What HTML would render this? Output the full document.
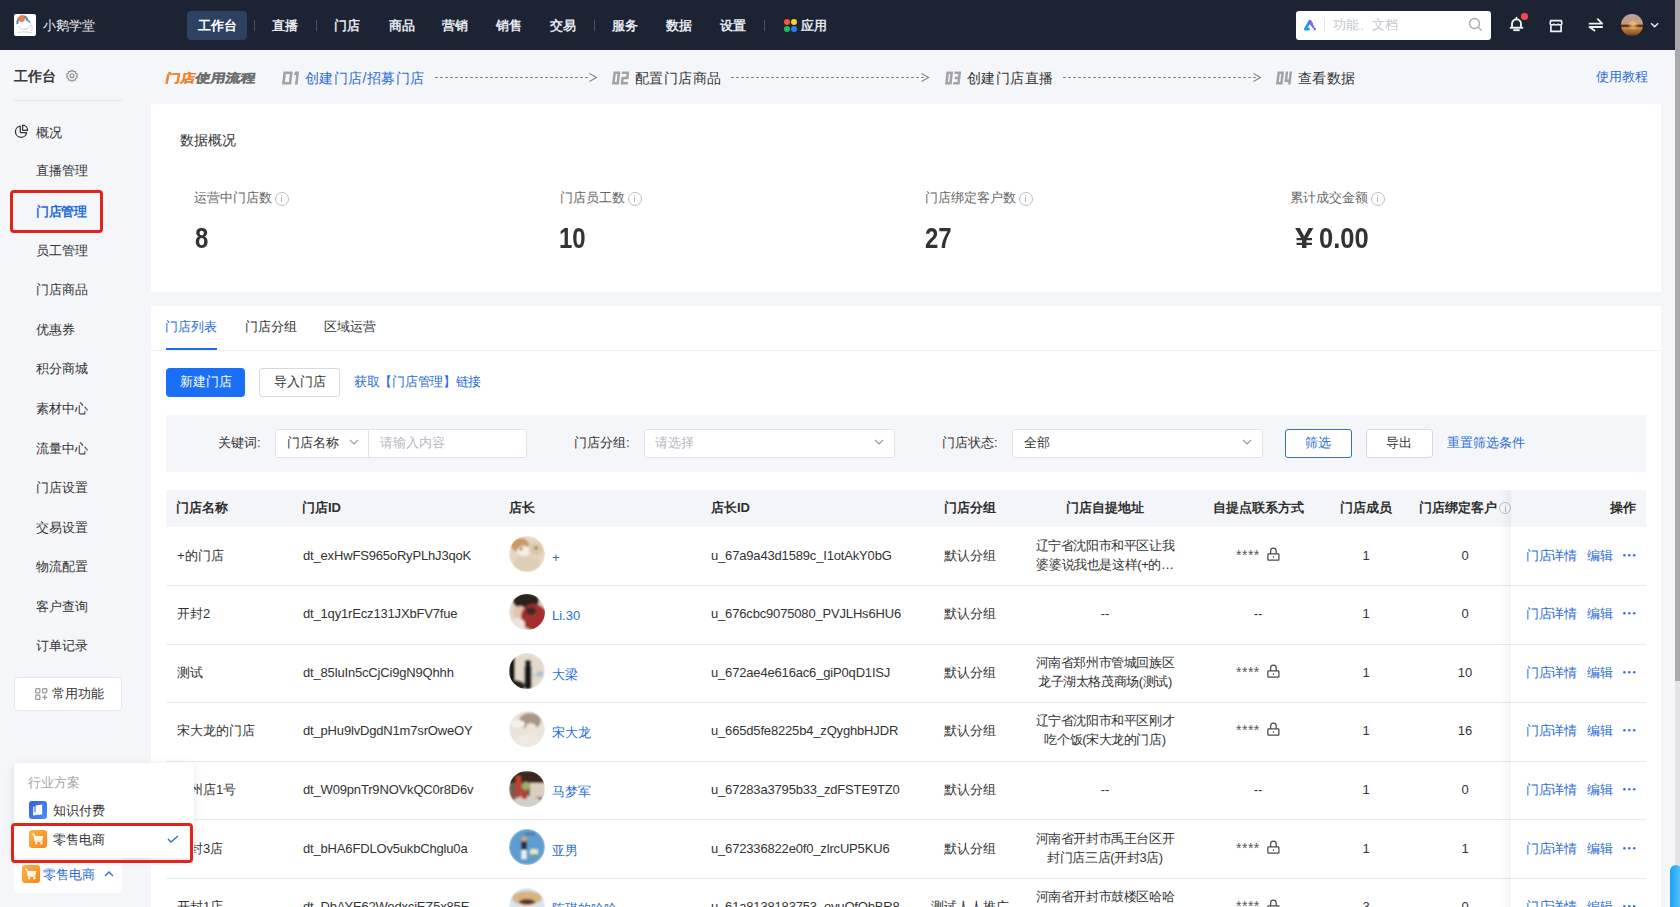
<!DOCTYPE html>
<html><head><meta charset="utf-8">
<style>
*{box-sizing:border-box;margin:0;padding:0}
html,body{width:1680px;height:907px;overflow:hidden}
body{font-family:"Liberation Sans",sans-serif;background:#f5f6fa;color:#333;position:relative;font-size:13px}
.a{position:absolute;white-space:nowrap}
#hdr{position:absolute;left:0;top:0;width:1680px;height:50px;background:#1c2332}
.nav{position:absolute;top:15.5px;font-size:13px;line-height:20px;color:#e4e7ee;font-weight:bold}
.sep{position:absolute;top:20px;width:1px;height:11px;background:#4a5162}
.side{position:absolute;white-space:nowrap;left:36px;font-size:13px;line-height:16px;color:#333}
.panel{position:absolute;background:#fff}
.blue{color:#2a6bd9}
.stat-l{position:absolute;top:190px;font-size:13px;color:#666;line-height:16px}
.stat-v{position:absolute;top:223px;font-size:30px;font-weight:bold;color:#333;line-height:30px;transform:scaleX(0.8);transform-origin:0 0}
.stepn{top:69px;font-size:16px;line-height:20px;font-weight:bold;font-style:italic;color:#a0a0a0;-webkit-text-stroke:0.6px #a0a0a0}
.stept{top:68px;font-size:14px;line-height:20px;color:#333;letter-spacing:0.4px}
.dash{top:77px;height:1px;background:repeating-linear-gradient(90deg,#8a8a8a 0 3px,transparent 3px 5px)}
.flab{top:433px;font-size:13px;line-height:20px;color:#333}
.ftx{top:433px;font-size:13px;line-height:20px}
.inp{top:429px;height:29px;background:#fff;border:1px solid #e1e3e8;border-radius:3px}
.th{font-size:13px;line-height:20px;font-weight:bold;color:#2e2e2e}
.td{font-size:13px;line-height:20px;color:#333}
.id{letter-spacing:-0.17px}
#sidebar{position:absolute;left:0;top:0;width:200px;height:907px;z-index:5}
.info{display:inline-block;width:14px;height:14px;border:1px solid #c0c0c0;border-radius:50%;vertical-align:-4px;margin-left:3px;position:relative}
.info:after{content:"";position:absolute;left:5px;top:4px;width:1px;height:5px;background:#b8b8b8}
.info:before{content:"";position:absolute;left:5px;top:2px;width:1px;height:1px;background:#b8b8b8}
</style></head><body>
<div id="hdr">
  <div class="a" style="left:14px;top:14px;width:22px;height:22px;background:#fff;border-radius:2px;overflow:hidden">
    <svg class="a" style="left:0;top:0" width="22" height="22" viewBox="0 0 22 22"><path d="M3.5 10 C3 6 5 3 8 2.5 C11 2 13.5 4 13 7" fill="none" stroke="#5f86ad" stroke-width="2.2"/><circle cx="7.6" cy="4.6" r="3.4" fill="#e8824f"/><path d="M12.5 6.5 C14.5 6 16 7 15.5 9" fill="none" stroke="#7a9cc0" stroke-width="1.6"/><path d="M5 12 C6 15 9 16 12 15 C14 14.5 16 12.5 17 11 C18.5 12 18.5 15 17 17" fill="none" stroke="#c8d2dc" stroke-width="1"/><path d="M3.5 19 C6 17.5 13 17.5 18 19" fill="none" stroke="#d0d6dc" stroke-width="1"/></svg>
  </div>
  <div class="a" style="left:43px;top:15.5px;font-size:13px;line-height:20px;color:#eceef2">小鹅学堂</div>
  <div class="a" style="left:187px;top:11px;width:60px;height:29px;background:#2d4163;border-radius:4px"></div>
  <div class="nav" style="left:198px;color:#fff">工作台</div>
  <div class="sep" style="left:254px"></div>
  <div class="nav" style="left:272px">直播</div>
  <div class="sep" style="left:316px"></div>
  <div class="nav" style="left:334px">门店</div>
  <div class="nav" style="left:389px">商品</div>
  <div class="nav" style="left:442px">营销</div>
  <div class="nav" style="left:496px">销售</div>
  <div class="nav" style="left:550px">交易</div>
  <div class="sep" style="left:594px"></div>
  <div class="nav" style="left:612px">服务</div>
  <div class="nav" style="left:666px">数据</div>
  <div class="nav" style="left:720px">设置</div>
  <div class="sep" style="left:764px"></div>
  <div class="a" style="left:784px;top:19px;width:12px;height:12px">
    <div class="a" style="left:0;top:0;width:6px;height:6px;border-radius:50%;background:#f25a32"></div>
    <div class="a" style="left:6.5px;top:0;width:6px;height:6px;border-radius:50%;background:#ffcf2e"></div>
    <div class="a" style="left:0;top:6.5px;width:6px;height:6px;border-radius:50%;background:#1fbf62"></div>
    <div class="a" style="left:6.5px;top:6.5px;width:6px;height:6px;border-radius:50%;background:#2a7ef8"></div>
  </div>
  <div class="nav" style="left:801px">应用</div>
  <!-- search -->
  <div class="a" style="left:1296px;top:11px;width:195px;height:29px;background:#fff;border-radius:3px"></div>
  <svg class="a" style="left:1303px;top:19px" width="15" height="12" viewBox="0 0 15 12"><defs><linearGradient id="lg1" x1="0" y1="1" x2="1" y2="0"><stop offset="0" stop-color="#12a8f0"/><stop offset="1" stop-color="#3a6ff0"/></linearGradient></defs><path d="M2.2 10.2 L6.9 2.2 L8.6 5 M2.2 10.2 L5.6 10.2" fill="none" stroke="url(#lg1)" stroke-width="2.7" stroke-linecap="round" stroke-linejoin="round"/><path d="M7.6 3.4 L10.2 8" fill="none" stroke="#8a63e8" stroke-width="2.5" stroke-linecap="round"/><circle cx="11.8" cy="10.1" r="1.3" fill="#8a63e8"/></svg>
  <div class="a" style="left:1324px;top:19px;width:1px;height:13px;background:#e2e4e8"></div>
  <div class="a" style="left:1333px;top:17px;font-size:13px;line-height:16px;color:#c4c7cd">功能、文档</div>
  <svg class="a" style="left:1468px;top:17px" width="15" height="15" viewBox="0 0 15 15"><circle cx="6.5" cy="6.5" r="5" fill="none" stroke="#a9abb0" stroke-width="1.4"/><path d="M10.2 10.2 L13.5 13.5" stroke="#a9abb0" stroke-width="1.4"/></svg>
  <!-- bell -->
  <svg class="a" style="left:1508px;top:16px" width="17" height="18" viewBox="0 0 17 18"><path d="M8.5 1.6 L8.5 3" stroke="#eef0f4" stroke-width="1.6" stroke-linecap="round"/><path d="M4 11.5 L4 8 C4 5.2 6 3.3 8.5 3.3 C11 3.3 13 5.2 13 8 L13 11.5" fill="none" stroke="#eef0f4" stroke-width="1.9"/><path d="M2.6 11.8 L14.4 11.8" stroke="#eef0f4" stroke-width="2" stroke-linecap="round"/><rect x="5.3" y="13.2" width="6.4" height="1.9" fill="#eef0f4"/></svg>
  <div class="a" style="left:1521px;top:13px;width:6.6px;height:6.6px;border-radius:50%;background:#f04a4a"></div>
  <svg class="a" style="left:1548px;top:17px" width="16" height="16" viewBox="0 0 16 16"><path d="M2.6 3.6 L13.4 3.6 L13.9 7 Q12.1 8.8 10.2 7.2 Q8 8.8 5.8 7.2 Q3.9 8.8 2.1 7 Z" fill="none" stroke="#eef0f4" stroke-width="1.6" stroke-linejoin="round"/><path d="M2.9 8.2 L2.9 14.4 L13.1 14.4 L13.1 8.2" fill="none" stroke="#eef0f4" stroke-width="1.7"/></svg>
  <svg class="a" style="left:1588px;top:18px" width="16" height="14" viewBox="0 0 16 14"><path d="M1.5 5.7 L14.2 5.7 L9.8 1.2" fill="none" stroke="#eef0f4" stroke-width="1.8" stroke-linejoin="round" stroke-linecap="round"/><path d="M14.2 9 L1.5 9 L6.4 12.6" fill="none" stroke="#eef0f4" stroke-width="1.8" stroke-linejoin="round" stroke-linecap="round"/></svg>
  <div class="a" style="left:1621px;top:14px;width:22px;height:22px;border-radius:50%;background:radial-gradient(circle at 55% 50%,rgba(255,205,120,.9) 0,rgba(255,190,100,0) 35%),linear-gradient(180deg,#b6a0a0 0%,#d09a78 45%,#5a3218 52%,#4a2a18 56%,#d08a48 62%,#9a6030 85%,#5a3a22 100%)"></div>
  <svg class="a" style="left:1650px;top:22px" width="10" height="6" viewBox="0 0 10 6"><path d="M1 1.2 L4.6 4.6 L8.2 1.2" fill="none" stroke="#e8eaee" stroke-width="1.5"/></svg>
</div>
<!-- scrollbar -->
<div class="a" style="left:1675px;top:0;width:5px;height:907px;background:#e4e4e6"></div>
<div class="a" style="left:1675px;top:0;width:5px;height:681px;background:#a9a9ab"></div>
<div class="a" style="left:1670px;top:865px;width:12px;height:50px;border-radius:6px 6px 0 0;background:linear-gradient(90deg,#1aa0ef,#5cc8ff)"></div>

<!-- SIDEBAR -->
<div id="sidebar">
  <div class="a" style="left:14px;top:66px;font-size:14px;line-height:20px;font-weight:bold;color:#383838">工作台</div>
  <svg class="a" style="left:65px;top:69px" width="14" height="14" viewBox="0 0 14 14"><path d="M7 1.2 L8.3 2.6 L10.2 2.3 L10.6 4.2 L12.4 5 L11.6 6.8 L12.4 8.6 L10.6 9.4 L10.2 11.3 L8.3 11 L7 12.4 L5.7 11 L3.8 11.3 L3.4 9.4 L1.6 8.6 L2.4 6.8 L1.6 5 L3.4 4.2 L3.8 2.3 L5.7 2.6 Z" fill="none" stroke="#8a8a8a" stroke-width="1.1" stroke-linejoin="round"/><circle cx="7" cy="6.8" r="2" fill="none" stroke="#8a8a8a" stroke-width="1.1"/></svg>
  <div class="a" style="left:14px;top:100px;width:108px;height:1px;background:#e3e5ea"></div>
  <svg class="a" style="left:14px;top:124px" width="15" height="15" viewBox="0 0 15 15"><path d="M6.3 2.2 A5.6 5.6 0 1 0 12.6 8.6 L6.3 8.6 Z" fill="none" stroke="#333" stroke-width="1.25" stroke-linejoin="round"/><path d="M8.6 1.2 L8.6 6.3 L13.6 6.3 A5.2 5.2 0 0 0 8.6 1.2 Z" fill="none" stroke="#333" stroke-width="1.25" stroke-linejoin="round"/></svg>
  <div class="side" style="top:123px;line-height:20px">概况</div>
  <div class="side" style="top:161px;line-height:20px">直播管理</div>
  <div class="a" style="left:9.5px;top:190px;width:93px;height:42.5px;border:3px solid #e2231a;border-radius:4px"></div>
  <div class="side" style="top:202px;line-height:20px;color:#1f6ae0;font-weight:bold;letter-spacing:-0.3px">门店管理</div>
  <div class="side" style="top:241px;line-height:20px">员工管理</div>
  <div class="side" style="top:280px;line-height:20px">门店商品</div>
  <div class="side" style="top:320px;line-height:20px">优惠券</div>
  <div class="side" style="top:359px;line-height:20px">积分商城</div>
  <div class="side" style="top:399px;line-height:20px">素材中心</div>
  <div class="side" style="top:439px;line-height:20px">流量中心</div>
  <div class="side" style="top:478px;line-height:20px">门店设置</div>
  <div class="side" style="top:518px;line-height:20px">交易设置</div>
  <div class="side" style="top:557px;line-height:20px">物流配置</div>
  <div class="side" style="top:597px;line-height:20px">客户查询</div>
  <div class="side" style="top:636px;line-height:20px">订单记录</div>
  <div class="a" style="left:14px;top:677px;width:108px;height:34px;background:#fff;border:1px solid #e4e6eb;border-radius:4px"></div>
  <svg class="a" style="left:35px;top:688px" width="13" height="12" viewBox="0 0 13 12"><rect x="0.7" y="0.7" width="4.2" height="4.2" rx="0.8" fill="none" stroke="#9a9a9a" stroke-width="1.3"/><rect x="7.6" y="0.7" width="4.2" height="4.2" rx="0.8" fill="none" stroke="#9a9a9a" stroke-width="1.3"/><rect x="0.7" y="7.2" width="4.2" height="4.2" rx="0.8" fill="none" stroke="#9a9a9a" stroke-width="1.3"/><path d="M9.7 6.8 L9.7 11.8 M7.2 9.3 L12.2 9.3" stroke="#9a9a9a" stroke-width="1.3"/></svg>
  <div class="a" style="left:52px;top:684px;font-size:13px;line-height:20px;color:#333">常用功能</div>
  <!-- bottom button -->
  <div class="a" style="left:14px;top:857px;width:108px;height:36px;background:#fff;border-radius:4px"></div>
  <div class="a" style="left:22px;top:865px;width:18px;height:18px;border-radius:3px;background:linear-gradient(135deg,#ffb444,#f6851f)"></div>
  <svg class="a" style="left:25px;top:868px" width="12" height="12" viewBox="0 0 12 12"><path d="M0.6 0.8 L2.2 2.2 L3.4 8 L10 8" fill="none" stroke="#fff" stroke-width="1.3" stroke-linejoin="round" stroke-linecap="round"/><path d="M2.6 3 L11.4 3 L10.4 7 L3.3 7 Z" fill="#fff" opacity="0.92"/><rect x="3.2" y="9.3" width="2" height="2" fill="#fff"/><rect x="8.4" y="9.3" width="2" height="2" fill="#fff"/></svg>
  <div class="a" style="left:43px;top:865px;font-size:13px;line-height:20px;color:#2a6bd9">零售电商</div>
  <svg class="a" style="left:104px;top:870px" width="10" height="7" viewBox="0 0 10 7"><path d="M1 6 L5 2 L9 6" fill="none" stroke="#2a6bd9" stroke-width="1.3"/></svg>
  <!-- popup -->
  <div class="a" style="left:14px;top:763px;width:180px;height:95px;background:#fff;border-radius:4px;box-shadow:0 2px 10px rgba(0,0,0,0.10)"></div>
  <div class="a" style="left:28px;top:773px;font-size:13px;line-height:20px;color:#a3a6ad">行业方案</div>
  <div class="a" style="left:29px;top:801px;width:18px;height:18px;border-radius:3px;background:linear-gradient(135deg,#3461e0,#4d8cf6)"></div>
  <svg class="a" style="left:29px;top:801px" width="18" height="18" viewBox="0 0 18 18"><path d="M6.6 4.6 L13.2 3.6 L13.2 13.6 Q9 13.6 4.2 14.4 L4.2 5.8 L5.4 5.6 L5.4 11.2 L6.6 11.2 Z" fill="#fff"/></svg>
  <div class="a" style="left:53px;top:801px;font-size:13px;line-height:20px;color:#333">知识付费</div>
  <div class="a" style="left:29px;top:830px;width:18px;height:18px;border-radius:3px;background:linear-gradient(135deg,#ffb444,#f6851f)"></div>
  <svg class="a" style="left:32px;top:833px" width="12" height="12" viewBox="0 0 12 12"><path d="M0.6 0.8 L2.2 2.2 L3.4 8 L10 8" fill="none" stroke="#fff" stroke-width="1.3" stroke-linejoin="round" stroke-linecap="round"/><path d="M2.6 3 L11.4 3 L10.4 7 L3.3 7 Z" fill="#fff" opacity="0.92"/><rect x="3.2" y="9.3" width="2" height="2" fill="#fff"/><rect x="8.4" y="9.3" width="2" height="2" fill="#fff"/></svg>
  <div class="a" style="left:53px;top:830px;font-size:13px;line-height:20px;color:#333">零售电商</div>
  <svg class="a" style="left:167px;top:835px" width="12" height="8" viewBox="0 0 12 8"><path d="M1 4 L4 7 L11 1" fill="none" stroke="#2a6bd9" stroke-width="1.3"/></svg>
  <div class="a" style="left:10.5px;top:822.5px;width:182px;height:40px;border:3px solid #e2231a;border-radius:4px"></div>
</div>
<!-- MAIN -->
<div id="main">
  <!-- step bar -->
  <!--digits--><svg class="a" style="left:281.8px;top:70.5px" width="22" height="14" viewBox="0 0 22 14"><g transform="translate(1.5,0.5) skewX(-6.6)"><path fill-rule="evenodd" fill="#a3a3a3" d="M0 0 H9.2 V13 H0 Z M2.6 2.6 V10.4 H6.6 V2.6 Z M11.8 0 H15.6 V13 H13.0 V3.4 H11 V1.6 Z"/></g></svg><svg class="a" style="left:612.4px;top:70.5px" width="22" height="14" viewBox="0 0 22 14"><g transform="translate(1.5,0.5) skewX(-6.6)"><path fill-rule="evenodd" fill="#a3a3a3" d="M0 0 H6.9 V13 H0 Z M2.6 2.6 V10.4 H4.300000000000001 V2.6 Z M8.6 0 H15.8 V7.7 H11.1 V10.5 H15.8 V13 H8.6 V5.3 H13.3 V2.5 H8.6 Z"/></g></svg><svg class="a" style="left:944.5px;top:70.5px" width="22" height="14" viewBox="0 0 22 14"><g transform="translate(1.5,0.5) skewX(-6.6)"><path fill-rule="evenodd" fill="#a3a3a3" d="M0 0 H6.6 V13 H0 Z M2.6 2.6 V10.4 H3.9999999999999996 V2.6 Z M8 0 H14.6 V13 H8 V10.5 H12.1 V7.7 H9 V5.3 H12.1 V2.5 H8 Z"/></g></svg><svg class="a" style="left:1275.5px;top:70.5px" width="22" height="14" viewBox="0 0 22 14"><g transform="translate(1.5,0.5) skewX(-6.6)"><path fill-rule="evenodd" fill="#a3a3a3" d="M0 0 H6.6 V13 H0 Z M2.6 2.6 V10.4 H3.9999999999999996 V2.6 Z M8.2 0 H10.7 V8 H12.1 V0 H14.6 V13 H12.1 V10.5 H8.2 Z"/></g></svg><!--/digits-->
  <div class="a" style="left:165px;top:67px;font-size:15px;line-height:20px;font-weight:900;color:#6e6e6e;transform:skewX(-10deg) scaleY(0.78);transform-origin:0 14px;-webkit-text-stroke:0.4px"><span style="color:#f0802f">门店</span>使用流程</div>
    <div class="a stept" style="left:305px;color:#2a6bd9">创建门店/招募门店</div>
  <div class="a dash" style="left:435px;width:153px"></div>
  <svg class="a" style="left:588px;top:72px" width="10" height="11" viewBox="0 0 10 11"><path d="M1.5 1.5 L8.5 5.5 L1.5 9.5" fill="none" stroke="#888" stroke-width="1.2"/></svg>
    <div class="a stept" style="left:635px">配置门店商品</div>
  <div class="a dash" style="left:731px;width:195px"></div>
  <svg class="a" style="left:920px;top:72px" width="10" height="11" viewBox="0 0 10 11"><path d="M1.5 1.5 L8.5 5.5 L1.5 9.5" fill="none" stroke="#888" stroke-width="1.2"/></svg>
    <div class="a stept" style="left:967px">创建门店直播</div>
  <div class="a dash" style="left:1063px;width:195px"></div>
  <svg class="a" style="left:1252px;top:72px" width="10" height="11" viewBox="0 0 10 11"><path d="M1.5 1.5 L8.5 5.5 L1.5 9.5" fill="none" stroke="#888" stroke-width="1.2"/></svg>
    <div class="a stept" style="left:1298px">查看数据</div>
  <div class="a" style="left:1596px;top:67px;font-size:13px;line-height:20px;color:#2a6bd9">使用教程</div>

  <!-- stats panel -->
  <div class="panel" style="left:151px;top:104px;width:1510px;height:188px"></div>
  <div class="a" style="left:180px;top:130px;font-size:14px;line-height:20px;color:#333">数据概况</div>
  <div class="a stat-l" style="left:194px">运营中门店数<i class="info"></i></div>
  <div class="a stat-v" style="left:195px">8</div>
  <div class="a stat-l" style="left:560px">门店员工数<i class="info"></i></div>
  <div class="a stat-v" style="left:559px">10</div>
  <div class="a stat-l" style="left:925px">门店绑定客户数<i class="info"></i></div>
  <div class="a stat-v" style="left:925px">27</div>
  <div class="a stat-l" style="left:1290px">累计成交金额<i class="info"></i></div>
  <div class="a stat-v" style="left:1295px;transform:scaleX(1.11)">¥</div><div class="a stat-v" style="left:1319px;transform:scaleX(0.85)">0.00</div>

  <!-- list panel -->
  <div class="panel" style="left:151px;top:306px;width:1510px;height:620px"></div>
  <div class="a" style="left:165px;top:317px;font-size:13px;line-height:20px;color:#2a6bd9">门店列表</div>
  <div class="a" style="left:165.5px;top:347.5px;width:51px;height:2.5px;background:#1f6ae6"></div>
  <div class="a" style="left:245px;top:317px;font-size:13px;line-height:20px;color:#333">门店分组</div>
  <div class="a" style="left:324px;top:317px;font-size:13px;line-height:20px;color:#333">区域运营</div>
  <div class="a" style="left:151px;top:350px;width:1510px;height:1px;background:#eff0f3"></div>

  <div class="a" style="left:166px;top:368px;width:79px;height:29px;background:#1b6ef6;border-radius:4px"></div>
  <div class="a" style="left:180px;top:372px;font-size:13px;line-height:20px;color:#fff">新建门店</div>
  <div class="a" style="left:259px;top:368px;width:81px;height:29px;background:#fff;border:1px solid #d7d9de;border-radius:3px"></div>
  <div class="a" style="left:274px;top:372px;font-size:13px;line-height:20px;color:#333">导入门店</div>
  <div class="a" style="left:354px;top:372px;font-size:13px;line-height:20px;color:#2a6bd9;letter-spacing:-0.3px">获取【门店管理】链接</div>

  <!-- filter -->
  <div class="a" style="left:166px;top:415px;width:1480px;height:57px;background:#f5f6fa"></div>
  <div class="a flab" style="left:218px">关键词:</div>
  <div class="a inp" style="left:275px;width:252px"></div>
  <div class="a" style="left:368px;top:430px;width:1px;height:27px;background:#e3e5ea"></div>
  <div class="a ftx" style="left:287px;color:#333">门店名称</div>
  <svg class="a" style="left:349px;top:439px" width="10" height="7" viewBox="0 0 10 7"><path d="M1 1 L5 5 L9 1" fill="none" stroke="#999" stroke-width="1.1"/></svg>
  <div class="a ftx" style="left:380px;color:#b5b8bf">请输入内容</div>
  <div class="a flab" style="left:574px">门店分组:</div>
  <div class="a inp" style="left:644px;width:251px"></div>
  <div class="a ftx" style="left:655px;color:#b5b8bf">请选择</div>
  <svg class="a" style="left:874px;top:439px" width="10" height="7" viewBox="0 0 10 7"><path d="M1 1 L5 5 L9 1" fill="none" stroke="#999" stroke-width="1.1"/></svg>
  <div class="a flab" style="left:942px">门店状态:</div>
  <div class="a inp" style="left:1012px;width:251px"></div>
  <div class="a ftx" style="left:1024px;color:#333">全部</div>
  <svg class="a" style="left:1242px;top:439px" width="10" height="7" viewBox="0 0 10 7"><path d="M1 1 L5 5 L9 1" fill="none" stroke="#999" stroke-width="1.1"/></svg>
  <div class="a" style="left:1285px;top:429px;width:67px;height:29px;border:1px solid #3a6dcc;border-radius:3px;background:#fff"></div>
  <div class="a ftx" style="left:1305px;color:#2a6bd9">筛选</div>
  <div class="a" style="left:1366px;top:429px;width:67px;height:29px;border:1px solid #d7d9de;border-radius:3px;background:#fff"></div>
  <div class="a ftx" style="left:1386px;color:#333">导出</div>
  <div class="a ftx" style="left:1447px;color:#2a6bd9">重置筛选条件</div>

  <!-- table -->
  <div id="tbl">
<div class="a" style="left:166px;top:490px;width:1480px;height:37px;background:#f4f5f8"></div>
<div class="a th" style="left:176px;top:498px">门店名称</div>
<div class="a th" style="left:302px;top:498px">门店ID</div>
<div class="a th" style="left:509px;top:498px">店长</div>
<div class="a th" style="left:711px;top:498px">店长ID</div>
<div class="a th" style="left:920px;top:498px;width:100px;text-align:center">门店分组</div>
<div class="a th" style="left:1035px;top:498px;width:140px;text-align:center">门店自提地址</div>
<div class="a th" style="left:1198px;top:498px;width:120px;text-align:center">自提点联系方式</div>
<div class="a th" style="left:1326px;top:498px;width:80px;text-align:center">门店成员</div>
<div class="a th" style="left:1419px;top:498px">门店绑定客户<i class="info" style="width:12px;height:12px;margin-left:2px;vertical-align:-2px"></i></div>
<div class="a th" style="left:1560px;top:498px;width:76px;text-align:right">操作</div>
<div class="a" style="left:166px;top:585px;width:1480px;height:1px;background:#e9eaed"></div>
<div class="a td" style="left:177px;top:546px">+的门店</div>
<div class="a td id" style="left:303px;top:546px">dt_exHwFS965oRyPLhJ3qoK</div>
<svg class="a" style="left:509px;top:536.4px" width="36" height="36" viewBox="0 0 36 36"><clipPath id="cp0"><circle cx="18" cy="18" r="18"/></clipPath><filter id="bl0"><feGaussianBlur stdDeviation="0.9"/></filter><g clip-path="url(#cp0)"><g filter="url(#bl0)"><circle cx="18" cy="18" r="18" fill="#e4d6c0"/><ellipse cx="11" cy="9" rx="9" ry="7" fill="#c99a62"/><ellipse cx="15" cy="15" rx="7" ry="5" fill="#f3ede4"/><ellipse cx="27" cy="13" rx="7" ry="6" fill="#d9c7a6"/><ellipse cx="18" cy="28" rx="13" ry="8" fill="#ddcfb6"/><circle cx="12" cy="13" r="1.3" fill="#3a2a20"/><circle cx="27" cy="12" r="1.5" fill="#6a5a40"/></g></g></svg>
<div class="a td" style="left:552px;top:547.5px;color:#2a6bd9">+</div>
<div class="a td id" style="left:711px;top:546px">u_67a9a43d1589c_I1otAkY0bG</div>
<div class="a td" style="left:920px;top:546px;width:100px;text-align:center">默认分组</div>
<div class="a td" style="left:1025px;top:535.5px;width:160px;text-align:center;line-height:19px;letter-spacing:-0.4px">辽宁省沈阳市和平区让我<br>婆婆说我也是这样(+的…</div>
<div class="a td" style="left:1236px;top:545px;color:#555;font-size:14px;letter-spacing:0.5px">****</div>
<svg class="a" style="left:1266.5px;top:547px" width="13" height="14" viewBox="0 0 13 14"><path d="M3.6 7 L3.6 4 A2.8 2.8 0 0 1 9.2 4 L9.2 7" fill="none" stroke="#4a4a4a" stroke-width="1.25"/><rect x="0.9" y="6.9" width="11" height="6.1" rx="0.6" fill="none" stroke="#4a4a4a" stroke-width="1.25"/><rect x="5.9" y="9" width="1.1" height="2" fill="#777"/></svg>
<div class="a td" style="left:1326px;top:546px;width:80px;text-align:center">1</div>
<div class="a td" style="left:1425px;top:546px;width:80px;text-align:center">0</div>
<div class="a" style="left:166px;top:644px;width:1480px;height:1px;background:#e9eaed"></div>
<div class="a td" style="left:177px;top:604px">开封2</div>
<div class="a td id" style="left:303px;top:604px">dt_1qy1rEcz131JXbFV7fue</div>
<svg class="a" style="left:509px;top:594.4px" width="36" height="36" viewBox="0 0 36 36"><clipPath id="cp1"><circle cx="18" cy="18" r="18"/></clipPath><filter id="bl1"><feGaussianBlur stdDeviation="0.9"/></filter><g clip-path="url(#cp1)"><g filter="url(#bl1)"><circle cx="18" cy="18" r="18" fill="#e2d6c8"/><ellipse cx="17" cy="7" rx="13" ry="8" fill="#2a211e"/><ellipse cx="11" cy="19" rx="7" ry="7" fill="#e4c4ae"/><ellipse cx="25" cy="23" rx="13" ry="13" fill="#a52f2d"/><ellipse cx="22" cy="17" rx="5" ry="4" fill="#3a2a28"/><ellipse cx="8" cy="30" rx="8" ry="6" fill="#ebe3da"/></g></g></svg>
<div class="a td" style="left:552px;top:605.5px;color:#2a6bd9">Li.30</div>
<div class="a td id" style="left:711px;top:604px">u_676cbc9075080_PVJLHs6HU6</div>
<div class="a td" style="left:920px;top:604px;width:100px;text-align:center">默认分组</div>
<div class="a td" style="left:1025px;top:604px;width:160px;text-align:center">--</div>
<div class="a td" style="left:1198px;top:604px;width:120px;text-align:center">--</div>
<div class="a td" style="left:1326px;top:604px;width:80px;text-align:center">1</div>
<div class="a td" style="left:1425px;top:604px;width:80px;text-align:center">0</div>
<div class="a" style="left:166px;top:702px;width:1480px;height:1px;background:#e9eaed"></div>
<div class="a td" style="left:177px;top:663px">测试</div>
<div class="a td id" style="left:303px;top:663px">dt_85luIn5cCjCi9gN9Qhhh</div>
<svg class="a" style="left:509px;top:653.4px" width="36" height="36" viewBox="0 0 36 36"><clipPath id="cp2"><circle cx="18" cy="18" r="18"/></clipPath><filter id="bl2"><feGaussianBlur stdDeviation="0.9"/></filter><g clip-path="url(#cp2)"><g filter="url(#bl2)"><circle cx="18" cy="18" r="18" fill="#e3dacb"/><rect x="0" y="0" width="6" height="36" fill="#1c1816"/><rect x="15.5" y="12" width="7" height="24" rx="2" fill="#161616"/><circle cx="19" cy="10" r="3.2" fill="#1a1a1a"/><ellipse cx="5" cy="33" rx="11" ry="6" fill="#262220"/><circle cx="31" cy="21" r="3" fill="#a9bfcf"/><circle cx="26" cy="22" r="2" fill="#c0ccd4"/></g></g></svg>
<div class="a td" style="left:552px;top:664.5px;color:#2a6bd9">大梁</div>
<div class="a td id" style="left:711px;top:663px">u_672ae4e616ac6_giP0qD1ISJ</div>
<div class="a td" style="left:920px;top:663px;width:100px;text-align:center">默认分组</div>
<div class="a td" style="left:1025px;top:652.5px;width:160px;text-align:center;line-height:19px;letter-spacing:-0.4px">河南省郑州市管城回族区<br>龙子湖太格茂商场(测试)</div>
<div class="a td" style="left:1236px;top:662px;color:#555;font-size:14px;letter-spacing:0.5px">****</div>
<svg class="a" style="left:1266.5px;top:664px" width="13" height="14" viewBox="0 0 13 14"><path d="M3.6 7 L3.6 4 A2.8 2.8 0 0 1 9.2 4 L9.2 7" fill="none" stroke="#4a4a4a" stroke-width="1.25"/><rect x="0.9" y="6.9" width="11" height="6.1" rx="0.6" fill="none" stroke="#4a4a4a" stroke-width="1.25"/><rect x="5.9" y="9" width="1.1" height="2" fill="#777"/></svg>
<div class="a td" style="left:1326px;top:663px;width:80px;text-align:center">1</div>
<div class="a td" style="left:1425px;top:663px;width:80px;text-align:center">10</div>
<div class="a" style="left:166px;top:761px;width:1480px;height:1px;background:#e9eaed"></div>
<div class="a td" style="left:177px;top:721px">宋大龙的门店</div>
<div class="a td id" style="left:303px;top:721px">dt_pHu9lvDgdN1m7srOweOY</div>
<svg class="a" style="left:509px;top:711.4px" width="36" height="36" viewBox="0 0 36 36"><clipPath id="cp3"><circle cx="18" cy="18" r="18"/></clipPath><filter id="bl3"><feGaussianBlur stdDeviation="0.9"/></filter><g clip-path="url(#cp3)"><g filter="url(#bl3)"><circle cx="18" cy="18" r="18" fill="#e9e3dc"/><ellipse cx="21" cy="10" rx="11" ry="8" fill="#ab9484"/><ellipse cx="22" cy="19" rx="6" ry="7" fill="#efe3d9"/><ellipse cx="9" cy="13" rx="7" ry="4" fill="#f5f0ea"/><ellipse cx="18" cy="31" rx="13" ry="7" fill="#efe9e2"/></g></g></svg>
<div class="a td" style="left:552px;top:722.5px;color:#2a6bd9">宋大龙</div>
<div class="a td id" style="left:711px;top:721px">u_665d5fe8225b4_zQyghbHJDR</div>
<div class="a td" style="left:920px;top:721px;width:100px;text-align:center">默认分组</div>
<div class="a td" style="left:1025px;top:710.5px;width:160px;text-align:center;line-height:19px;letter-spacing:-0.4px">辽宁省沈阳市和平区刚才<br>吃个饭(宋大龙的门店)</div>
<div class="a td" style="left:1236px;top:720px;color:#555;font-size:14px;letter-spacing:0.5px">****</div>
<svg class="a" style="left:1266.5px;top:722px" width="13" height="14" viewBox="0 0 13 14"><path d="M3.6 7 L3.6 4 A2.8 2.8 0 0 1 9.2 4 L9.2 7" fill="none" stroke="#4a4a4a" stroke-width="1.25"/><rect x="0.9" y="6.9" width="11" height="6.1" rx="0.6" fill="none" stroke="#4a4a4a" stroke-width="1.25"/><rect x="5.9" y="9" width="1.1" height="2" fill="#777"/></svg>
<div class="a td" style="left:1326px;top:721px;width:80px;text-align:center">1</div>
<div class="a td" style="left:1425px;top:721px;width:80px;text-align:center">16</div>
<div class="a" style="left:166px;top:819px;width:1480px;height:1px;background:#e9eaed"></div>
<div class="a td" style="left:177px;top:780px">郑州店1号</div>
<div class="a td id" style="left:303px;top:780px">dt_W09pnTr9NOVkQC0r8D6v</div>
<svg class="a" style="left:509px;top:770.9px" width="36" height="36" viewBox="0 0 36 36"><clipPath id="cp4"><circle cx="18" cy="18" r="18"/></clipPath><filter id="bl4"><feGaussianBlur stdDeviation="0.9"/></filter><g clip-path="url(#cp4)"><g filter="url(#bl4)"><circle cx="18" cy="18" r="18" fill="#7a5a4e"/><rect x="0" y="0" width="36" height="12" fill="#3a2822"/><rect x="7" y="5" width="5" height="26" fill="#c2412f"/><rect x="21" y="12" width="15" height="14" fill="#d8cfbf"/><circle cx="17" cy="15" r="4" fill="#9bb064"/><ellipse cx="18" cy="31" rx="14" ry="6" fill="#d4d0cc"/><rect x="13" y="20" width="5" height="8" fill="#b83a30"/></g></g></svg>
<div class="a td" style="left:552px;top:781.5px;color:#2a6bd9">马梦军</div>
<div class="a td id" style="left:711px;top:780px">u_67283a3795b33_zdFSTE9TZ0</div>
<div class="a td" style="left:920px;top:780px;width:100px;text-align:center">默认分组</div>
<div class="a td" style="left:1025px;top:780px;width:160px;text-align:center">--</div>
<div class="a td" style="left:1198px;top:780px;width:120px;text-align:center">--</div>
<div class="a td" style="left:1326px;top:780px;width:80px;text-align:center">1</div>
<div class="a td" style="left:1425px;top:780px;width:80px;text-align:center">0</div>
<div class="a" style="left:166px;top:878px;width:1480px;height:1px;background:#e9eaed"></div>
<div class="a td" style="left:177px;top:839px">开封3店</div>
<div class="a td id" style="left:303px;top:839px">dt_bHA6FDLOv5ukbChglu0a</div>
<svg class="a" style="left:509px;top:829.4px" width="36" height="36" viewBox="0 0 36 36"><clipPath id="cp5"><circle cx="18" cy="18" r="18"/></clipPath><filter id="bl5"><feGaussianBlur stdDeviation="0.9"/></filter><g clip-path="url(#cp5)"><g filter="url(#bl5)"><circle cx="18" cy="18" r="18" fill="#5e9dd0"/><rect x="12" y="12" width="6" height="9" rx="2" fill="#2b3142"/><rect x="12.5" y="21" width="5" height="9" fill="#f2f2f2"/><circle cx="15" cy="10" r="2.5" fill="#e0a060"/><rect x="21" y="20" width="8" height="7" rx="2" fill="#e9e2d2"/><rect x="21" y="25" width="8" height="3" fill="#6aa684"/><path d="M16 5 L26 5" stroke="#2a3a60" stroke-width="1"/></g></g></svg>
<div class="a td" style="left:552px;top:840.5px;color:#2a6bd9">亚男</div>
<div class="a td id" style="left:711px;top:839px">u_672336822e0f0_zlrcUP5KU6</div>
<div class="a td" style="left:920px;top:839px;width:100px;text-align:center">默认分组</div>
<div class="a td" style="left:1025px;top:828.5px;width:160px;text-align:center;line-height:19px;letter-spacing:-0.4px">河南省开封市禹王台区开<br>封门店三店(开封3店)</div>
<div class="a td" style="left:1236px;top:838px;color:#555;font-size:14px;letter-spacing:0.5px">****</div>
<svg class="a" style="left:1266.5px;top:840px" width="13" height="14" viewBox="0 0 13 14"><path d="M3.6 7 L3.6 4 A2.8 2.8 0 0 1 9.2 4 L9.2 7" fill="none" stroke="#4a4a4a" stroke-width="1.25"/><rect x="0.9" y="6.9" width="11" height="6.1" rx="0.6" fill="none" stroke="#4a4a4a" stroke-width="1.25"/><rect x="5.9" y="9" width="1.1" height="2" fill="#777"/></svg>
<div class="a td" style="left:1326px;top:839px;width:80px;text-align:center">1</div>
<div class="a td" style="left:1425px;top:839px;width:80px;text-align:center">1</div>
<div class="a td" style="left:177px;top:897px">开封1店</div>
<div class="a td id" style="left:303px;top:897px">dt_DbAYE62WodxcjEZ5x85E</div>
<svg class="a" style="left:509px;top:887.9px" width="36" height="36" viewBox="0 0 36 36"><clipPath id="cp6"><circle cx="18" cy="18" r="18"/></clipPath><filter id="bl6"><feGaussianBlur stdDeviation="0.9"/></filter><g clip-path="url(#cp6)"><g filter="url(#bl6)"><circle cx="18" cy="18" r="18" fill="#d6e6ee"/><ellipse cx="18" cy="10" rx="15" ry="7" fill="#d9b283"/><circle cx="18" cy="22" r="8" fill="#f4ddd0"/><ellipse cx="18" cy="14" rx="8" ry="3" fill="#5a3a28"/></g></g></svg>
<div class="a td" style="left:552px;top:898.5px;color:#2a6bd9">陈琪的哈哈</div>
<div class="a td id" style="left:711px;top:897px">u_61a8138183753_oyuOfQhBR8</div>
<div class="a td" style="left:920px;top:897px;width:100px;text-align:center">测试人人推广</div>
<div class="a td" style="left:1025px;top:887.0px;width:160px;text-align:center;line-height:19px;letter-spacing:-0.4px">河南省开封市鼓楼区哈哈<br>商场</div>
<div class="a td" style="left:1236px;top:896px;color:#555;font-size:14px;letter-spacing:0.5px">****</div>
<svg class="a" style="left:1266.5px;top:898.5px" width="13" height="14" viewBox="0 0 13 14"><path d="M3.6 7 L3.6 4 A2.8 2.8 0 0 1 9.2 4 L9.2 7" fill="none" stroke="#4a4a4a" stroke-width="1.25"/><rect x="0.9" y="6.9" width="11" height="6.1" rx="0.6" fill="none" stroke="#4a4a4a" stroke-width="1.25"/><rect x="5.9" y="9" width="1.1" height="2" fill="#777"/></svg>
<div class="a td" style="left:1326px;top:897px;width:80px;text-align:center">3</div>
<div class="a td" style="left:1425px;top:897px;width:80px;text-align:center">0</div>
<div class="a" style="left:1500px;top:490px;width:11px;height:420px;background:linear-gradient(90deg,rgba(0,0,0,0),rgba(0,0,0,0.045))"></div>
<div class="a td" style="left:1526px;top:546px;color:#2a6bd9;letter-spacing:-0.3px">门店详情</div>
<div class="a td" style="left:1587px;top:546px;color:#2a6bd9">编辑</div>
<svg class="a" style="left:1622px;top:552px" width="16" height="6" viewBox="0 0 16 6"><circle cx="2.4" cy="3.2" r="1.3" fill="#3a76dd"/><circle cx="7.3" cy="3.2" r="1.3" fill="#3a76dd"/><circle cx="12.2" cy="3.2" r="1.3" fill="#3a76dd"/></svg>
<div class="a td" style="left:1526px;top:604px;color:#2a6bd9;letter-spacing:-0.3px">门店详情</div>
<div class="a td" style="left:1587px;top:604px;color:#2a6bd9">编辑</div>
<svg class="a" style="left:1622px;top:610px" width="16" height="6" viewBox="0 0 16 6"><circle cx="2.4" cy="3.2" r="1.3" fill="#3a76dd"/><circle cx="7.3" cy="3.2" r="1.3" fill="#3a76dd"/><circle cx="12.2" cy="3.2" r="1.3" fill="#3a76dd"/></svg>
<div class="a td" style="left:1526px;top:663px;color:#2a6bd9;letter-spacing:-0.3px">门店详情</div>
<div class="a td" style="left:1587px;top:663px;color:#2a6bd9">编辑</div>
<svg class="a" style="left:1622px;top:669px" width="16" height="6" viewBox="0 0 16 6"><circle cx="2.4" cy="3.2" r="1.3" fill="#3a76dd"/><circle cx="7.3" cy="3.2" r="1.3" fill="#3a76dd"/><circle cx="12.2" cy="3.2" r="1.3" fill="#3a76dd"/></svg>
<div class="a td" style="left:1526px;top:721px;color:#2a6bd9;letter-spacing:-0.3px">门店详情</div>
<div class="a td" style="left:1587px;top:721px;color:#2a6bd9">编辑</div>
<svg class="a" style="left:1622px;top:727px" width="16" height="6" viewBox="0 0 16 6"><circle cx="2.4" cy="3.2" r="1.3" fill="#3a76dd"/><circle cx="7.3" cy="3.2" r="1.3" fill="#3a76dd"/><circle cx="12.2" cy="3.2" r="1.3" fill="#3a76dd"/></svg>
<div class="a td" style="left:1526px;top:780px;color:#2a6bd9;letter-spacing:-0.3px">门店详情</div>
<div class="a td" style="left:1587px;top:780px;color:#2a6bd9">编辑</div>
<svg class="a" style="left:1622px;top:786px" width="16" height="6" viewBox="0 0 16 6"><circle cx="2.4" cy="3.2" r="1.3" fill="#3a76dd"/><circle cx="7.3" cy="3.2" r="1.3" fill="#3a76dd"/><circle cx="12.2" cy="3.2" r="1.3" fill="#3a76dd"/></svg>
<div class="a td" style="left:1526px;top:839px;color:#2a6bd9;letter-spacing:-0.3px">门店详情</div>
<div class="a td" style="left:1587px;top:839px;color:#2a6bd9">编辑</div>
<svg class="a" style="left:1622px;top:845px" width="16" height="6" viewBox="0 0 16 6"><circle cx="2.4" cy="3.2" r="1.3" fill="#3a76dd"/><circle cx="7.3" cy="3.2" r="1.3" fill="#3a76dd"/><circle cx="12.2" cy="3.2" r="1.3" fill="#3a76dd"/></svg>
<div class="a td" style="left:1526px;top:897px;color:#2a6bd9;letter-spacing:-0.3px">门店详情</div>
<div class="a td" style="left:1587px;top:897px;color:#2a6bd9">编辑</div>
<svg class="a" style="left:1622px;top:903px" width="16" height="6" viewBox="0 0 16 6"><circle cx="2.4" cy="3.2" r="1.3" fill="#3a76dd"/><circle cx="7.3" cy="3.2" r="1.3" fill="#3a76dd"/><circle cx="12.2" cy="3.2" r="1.3" fill="#3a76dd"/></svg>
</div><!--/tbl-->
</div>
</body></html>
